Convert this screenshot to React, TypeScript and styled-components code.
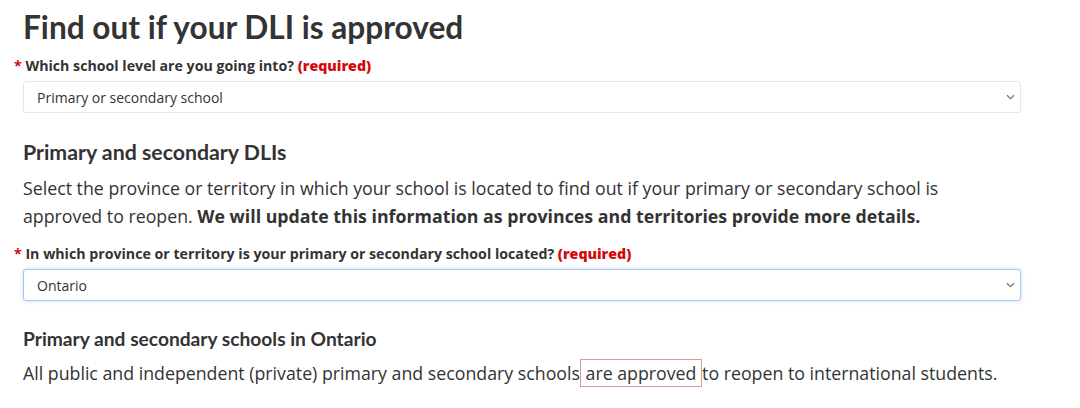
import React, { useState } from "react";
import styled, { createGlobalStyle } from "styled-components";

const GlobalStyle = createGlobalStyle`
  body {
    margin: 0;
    background: #ffffff;
    color: #333333;
    font-family: "Open Sans", "Noto Sans", sans-serif;
  }
`;

const Chevron = () => (
    <ChevronIcon width="9" height="6" viewBox="0 0 9 6">
        <path d="M1 1.2 L4.5 4.6 L8 1.2" fill="none" stroke="#777777" strokeWidth="1.3" />
    </ChevronIcon>
);

const App = () => {
    const [level, setLevel] = useState("primary");
    const [province, setProvince] = useState("on");

    return (
        <Page>
            <GlobalStyle />
            <Title>Find out if your DLI is approved</Title>

            <Field>
                <Label>
                    <Star>*</Star> Which school level are you going into? <Required>(required)</Required>
                </Label>
                <SelectWrap>
                    <Select value={level} onChange={(e) => setLevel(e.target.value)}>
                        <option value="primary">Primary or secondary school</option>
                        <option value="post">Post-secondary school</option>
                    </Select>
                    <Chevron />
                </SelectWrap>
            </Field>

            <Section>
                <SubTitle>Primary and secondary DLIs</SubTitle>
                <Text>
                    Select the province or territory in which your school is located to find out if your primary or
                    secondary school is approved to reopen.{" "}
                    <strong>We will update this information as provinces and territories provide more details.</strong>
                </Text>
            </Section>

            <Field>
                <Label>
                    <Star>*</Star> In which province or territory is your primary or secondary school located?{" "}
                    <Required>(required)</Required>
                </Label>
                <SelectWrap>
                    <Select focused value={province} onChange={(e) => setProvince(e.target.value)}>
                        <option value="on">Ontario</option>
                        <option value="qc">Quebec</option>
                    </Select>
                    <Chevron />
                </SelectWrap>
            </Field>

            <Section>
                <SmallTitle>Primary and secondary schools in Ontario</SmallTitle>
                <Text>
                    All public and independent (private) primary and secondary schools<Mark> are approved </Mark>to
                    reopen to international students.
                </Text>
            </Section>
        </Page>
    );
};

const Page = styled.div`
  width: 1080px;
  height: 408px;
  overflow: hidden;
  padding: 7px 59px 0 23px;
  box-sizing: border-box;
`;

const Title = styled.h1`
  margin: 0 0 9px;
  font-family: "Lato", sans-serif;
  font-weight: 700;
  font-size: 31.6px;
  line-height: 40px;
  color: #333333;
`;

const Field = styled.div`
  display: flex;
  flex-direction: column;
  gap: 5px;
`;

const Label = styled.label`
  margin-left: -9px;
  font-size: 14.2px;
  font-weight: 700;
  line-height: 20px;
  color: #333333;
`;

const Star = styled.span`
  color: #d3080c;
`;

const Required = styled.strong`
  color: #d3080c;
`;

const SelectWrap = styled.div`
  position: relative;
  width: 100%;
`;

const ChevronIcon = styled.svg`
  position: absolute;
  right: 6px;
  top: 50%;
  transform: translateY(-50%);
  pointer-events: none;
`;

const Select = styled.select<{ focused?: boolean }>`
  display: block;
  width: 100%;
  height: 32px;
  padding: 0 13px;
  font-family: "Open Sans", sans-serif;
  font-size: 14px;
  color: #333333;
  background: #ffffff;
  border: 1px solid ${(p) => (p.focused ? "#a9c8ea" : "#e6e6e6")};
  border-radius: 3px;
  box-shadow: ${(p) => (p.focused ? "0 0 4px rgba(102, 175, 233, 0.4)" : "none")};
  outline: none;
  appearance: none;
`;

const Section = styled.section`
  margin-top: 25px;
  margin-bottom: 14px;
`;

const SubTitle = styled.h2`
  margin: 0 0 8px;
  font-family: "Lato", sans-serif;
  font-weight: 700;
  font-size: 21.3px;
  line-height: 28px;
  color: #333333;
`;

const SmallTitle = styled.h3`
  margin: 0 0 7px;
  font-family: "Lato", sans-serif;
  font-weight: 700;
  font-size: 19.2px;
  line-height: 26px;
  color: #333333;
`;

const Text = styled.p`
  margin: 0;
  font-size: 17.75px;
  line-height: 28px;
  color: #333333;

  strong {
    font-weight: 700;
  }
`;

const Mark = styled.span`
  border: 1px solid #e09a96;
  padding: 1px 0;
`;

export default App;
